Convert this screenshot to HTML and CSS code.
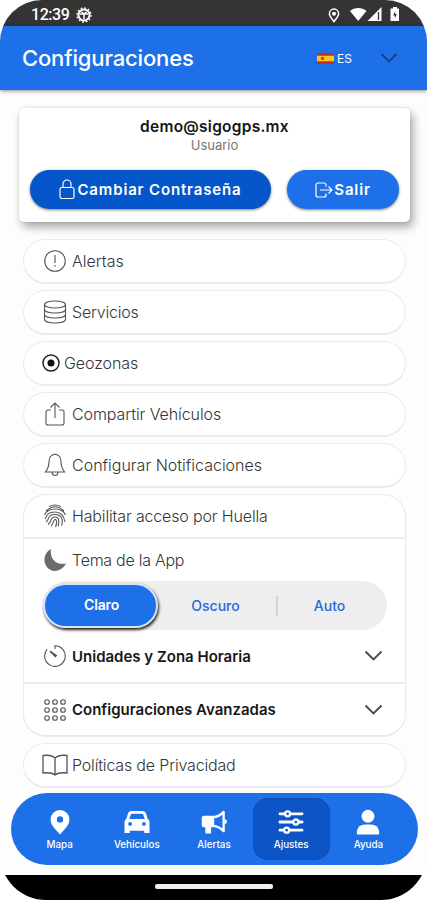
FILE: index.html
```html
<!DOCTYPE html>
<html lang="es">
<head>
<meta charset="utf-8">
<title>Configuraciones</title>
<link rel="stylesheet" href="styles.css">
</head>
<body>
<div class="screen">
  <div class="status">
    <span class="clock">12:39</span>
    <svg class="gear" width="16" height="16" viewBox="0 0 16 16"><circle cx="8" cy="8" r="5.500" fill="none" stroke="#fff" stroke-width="2"/><circle cx="8" cy="8" r="7" fill="none" stroke="#fff" stroke-width="1.400" stroke-dasharray="1.8 1.87"/><path d="M4 7h8M8 7v5M5.500 4.800L8 7l2.500-2.200" stroke="#fff" stroke-width="1.500" fill="none"/></svg>
    <svg class="pin" width="12" height="15" viewBox="0 0 12 15"><path d="M6 13.600C4 10.800 1.400 8.200 1.400 5.700a4.600 4.600 0 0 1 9.200 0C10.600 8.200 8 10.800 6 13.600Z" fill="none" stroke="#fff" stroke-width="1.500"/><circle cx="6" cy="5.700" r="2" fill="#fff"/></svg>
    <svg class="signals" width="49" height="16" viewBox="0 0 49 16"><path d="M0 4C4.500 0 12 0 16.500 4L8.200 14Z" fill="#fff"/><path d="M31.500 0v14H17.500Z" fill="#fff"/><path d="M28.500 5v8" stroke="#343434" stroke-width="1.300"/><path d="M41 1.500h2V0h4v1.500h2V14h-8.500V1.500Z" fill="#fff"/><path d="M45.200 4l-2 4.500h1.600v3l2-4.500h-1.600Z" fill="#343434"/></svg>
  </div>
  <header class="header">
    <h1>Configuraciones</h1>
    <div class="lang">
      <svg width="17" height="11" viewBox="0 0 17 11"><path fill="#c92a22" d="M0 0h17v11H0z"/><path fill="#fbc51c" d="M0 2.700h17v5.600H0z"/><path fill="#a9572c" d="M4 4h3v3H4z"/></svg>
      <span>ES</span>
    </div>
    <svg class="langchev" width="18" height="10" viewBox="0 0 18 10"><path d="M1.500 1L9 8.300 16.500 1" fill="none" stroke="#12376f" stroke-width="1.700"/></svg>
  </header>

  <section class="account">
    <div class="mail">demo@sigogps.mx</div>
    <div class="role">Usuario</div>
    <div class="actions">
      <button class="btn dark"><svg width="16" height="21" viewBox="0 0 16 21"><rect x="1" y="8.500" width="14" height="11" rx="1.800"/><path d="M4 8.500V5a4 4 0 0 1 8 0v3.500"/></svg><span>Cambiar Contraseña</span></button>
      <button class="btn exit"><svg width="18" height="16" viewBox="0 0 18 16"><path d="M11 4.500V3a2 2 0 0 0-2-2H3a2 2 0 0 0-2 2v10a2 2 0 0 0 2 2h6a2 2 0 0 0 2-2v-1.500M5 8h12M13.500 4.500L17 8l-3.500 3.500"/></svg><span>Salir</span></button>
    </div>
  </section>

  <main class="list">
    <div class="pill"><svg class="ic" viewBox="0 0 24 24"><circle cx="12" cy="12" r="10.300"/><path d="M12 6v8M12 16v1.800"/></svg><span>Alertas</span></div>
    <div class="pill tight"><svg class="ic" viewBox="0 0 24 24"><ellipse cx="12" cy="4.500" rx="10.500" ry="3.500"/><path d="M1.500 4.500v15c0 2 4.500 3.500 10.500 3.500s10.500-1.500 10.500-3.500v-15M1.500 9.500c0 2 4.500 3.500 10.500 3.500s10.500-1.500 10.500-3.500M1.500 14.500c0 2 4.500 3.500 10.500 3.500s10.500-1.500 10.500-3.500"/></svg><span>Servicios</span></div>
    <div class="pill geo"><svg width="18" height="18" viewBox="0 0 18 18"><circle cx="9" cy="9" r="8" fill="none" stroke="#222" stroke-width="1.500"/><circle cx="9" cy="9" r="3.500" fill="#111"/></svg><span>Geozonas</span></div>
    <div class="pill share"><svg class="ic" viewBox="0 0 24 24"><path d="M8 8H5a2 2 0 0 0-2 2v11a2 2 0 0 0 2 2h14a2 2 0 0 0 2-2V10a2 2 0 0 0-2-2h-3M12 16V1.500M7.500 5.500L12 1l4.500 4.500"/></svg><span>Compartir Vehículos</span></div>
    <div class="pill"><svg class="ic" viewBox="0 0 24 24"><path d="M12 1.300c-4.500.7-6 3.700-6 7.200 0 6-1.500 8-3.600 10.500h19.200C19.500 16.500 18 14.500 18 8.500c0-3.500-1.500-6.500-6-7.200ZM9 19.500c.3 4 5.700 4 6 0"/></svg><span>Configurar Notificaciones</span></div>

    <div class="group">
      <div class="row finger"><svg class="ic" viewBox="0 0 24 24"><path d="M6 2.500Q12-.5 18 2.500M3 7Q12-1.500 21 7M1.500 11C5 3 19 3 22.500 11M2 15c2-2 1-7 10-7 6 0 9 4 10 10M3 18c4-3 1-7.500 9-7.500 8 0 8 7 6.500 11M5 20.500c5-4 1.500-7.500 7-7.500 5 0 4 6 3 9.500M8 22c3-3 2-6.500 4-6.500s2 4 .5 7.500"/></svg><span>Habilitar acceso por Huella</span></div>
      <div class="row theme"><svg width="24" height="24" viewBox="0 0 24 24"><path d="M8 1C6.500 10.500 13 17.500 23 15.500 18.500 24 8.500 25.500 3.500 18.500-.5 12.500 1.500 4.500 8 1Z" fill="#6b6b6b"/></svg><span>Tema de la App</span></div>
      <div class="segment">
        <div class="seg active">Claro</div><div class="seg oscuro">Oscuro</div><i></i><div class="seg auto">Auto</div>
      </div>
      <div class="row fold units"><svg class="ic" viewBox="0 0 24 24"><path d="M12 5V1.700A10.300 10.300 0 1 1 4.200 5.200M7 7.500l5.500 4.700"/><path d="M7 7l6.500 4.500-1.300 1.300Z" fill="#444"/></svg><span>Unidades y Zona Horaria</span><svg class="chev" width="19" height="12" viewBox="0 0 19 12"><path d="M1.500 1.500l8 8 8-8"/></svg></div>
      <div class="row fold advanced"><svg class="ic" viewBox="0 0 24 24"><g><circle cx="4" cy="4" r="2.300"/><circle cx="12" cy="4" r="2.300"/><circle cx="20" cy="4" r="2.300"/><circle cx="4" cy="12" r="2.300"/><circle cx="12" cy="12" r="2.300"/><circle cx="20" cy="12" r="2.300"/><circle cx="4" cy="20" r="2.300"/><circle cx="12" cy="20" r="2.300"/><circle cx="20" cy="20" r="2.300"/></g></svg><span>Configuraciones Avanzadas</span><svg class="chev" width="19" height="12" viewBox="0 0 19 12"><path d="M1.500 1.500l8 8 8-8"/></svg></div>
    </div>

    <div class="pill privacy"><svg class="book" width="26" height="22" viewBox="0 0 26 22"><path d="M13 4C10 1 5 1 1 1.500V19c4-.5 9-.5 12 2 3-2.500 8-2.500 12-2V1.500C21 1 16 1 13 4ZM13 4v17"/></svg><span>Políticas de Privacidad</span></div>
  </main>

  <nav class="tabs">
    <a class="tab"><svg viewBox="0 0 27 27"><path fill="#fff" fill-rule="evenodd" d="M13.500 1A9.800 9.800 0 0 0 3.700 10.800C3.700 17 9.500 21.500 13.500 26.500 17.500 21.500 23.300 17 23.300 10.800A9.800 9.800 0 0 0 13.500 1ZM13.500 7.500a3.300 3.300 0 1 1 0 6.600 3.300 3.300 0 0 1 0-6.600Z"/></svg><span>Mapa</span></a>
    <a class="tab"><svg viewBox="0 0 27 27"><path fill="#fff" fill-rule="evenodd" d="M8 2h11q3 0 4 3l1.500 5q2 1 2 4v11h-5.500v-2.500h-15V25H.5V14q0-3 2-4L4 5q1-3 4-3ZM8.500 5q-1.200 0-1.700 1.500L5.500 10.500h16L20.200 6.500Q19.700 5 18.500 5ZM6.300 13.500a2 2 0 1 0 0 4 2 2 0 0 0 0-4ZM20.700 13.500a2 2 0 1 0 0 4 2 2 0 0 0 0-4Z"/></svg><span>Vehículos</span></a>
    <a class="tab"><svg viewBox="0 0 27 27"><path fill="#fff" d="M3.500 7H13v12h-2.500v6.500h-6V19H3.500Q.8 19 .8 16.500v-7Q.8 7 3.500 7Z"/><path d="M12.500 8.500Q19 8 23.500 3v20Q19 18 12.500 17.500Z" fill="none" stroke="#fff" stroke-width="2.400" stroke-linejoin="round"/><path d="M24.500 10q2.500 1 2.500 3t-2.500 3Z" fill="#fff"/></svg><span>Alertas</span></a>
    <a class="tab selected"><svg viewBox="0 0 27 27"><path d="M2 5h23M2 13.500h23M2 22h23" stroke="#fff" stroke-width="2.900" stroke-linecap="round"/><g fill="#0d55c7" stroke="#fff" stroke-width="2.400"><circle cx="10" cy="5" r="2.600"/><circle cx="18.500" cy="13.500" r="2.600"/><circle cx="9" cy="22" r="2.600"/></g></svg><span>Ajustes</span></a>
    <a class="tab"><svg viewBox="0 0 27 27"><circle cx="13.500" cy="7.500" r="6.700" fill="#fff"/><path d="M2 26.500v-3q1-7.500 8.500-7.500h6q7.500 0 8.500 7.500v3Z" fill="#fff"/></svg><span>Ayuda</span></a>
  </nav>
  <div class="gesture"><i></i></div>
</div>
</body>
</html>
```
FILE: styles.css
```css
* { box-sizing: border-box; }
body { margin: 0; background: #fff; font-family: Inter, "Open Sans", sans-serif; }
.screen { width: 427px; height: 900px; display: flex; flex-direction: column; overflow: hidden; border-radius: 42px 42px 46px 46px; background: #fdfdfd; white-space: nowrap; }
svg { flex: none; display: block; }

.status { flex: none; height: 26px; background: #343434; color: #fff; display: flex; align-items: center; padding: 4px 28px 0 31px; }
.clock { font: 500 16px/22px Roboto, sans-serif; letter-spacing: -.45px; }
.gear { margin-left: 7px; }
.pin { margin-left: auto; margin-right: 10px; }

.header { flex: none; height: 64px; background: #1e70e9; color: #fff; display: flex; align-items: center; padding: 0 29px 0 22px; box-shadow: 0 1px 4px rgba(0,0,0,.45); }
h1 { margin: 0; font-size: 22px; line-height: 28px; font-weight: 500; letter-spacing: -.15px; }
.lang { display: flex; align-items: center; gap: 3px; margin-left: auto; font-size: 12px; }
.langchev { margin-left: 28px; }

.account { flex: none; margin: 18px 17px 0 19px; height: 114px; border-radius: 5px; background: #fff; box-shadow: 3px 5px 10px rgba(0,0,0,.35), 0 0 2px rgba(0,0,0,.15); padding-top: 9px; text-align: center; }
.mail { font-size: 15.500px; line-height: 20px; font-weight: 600; letter-spacing: .25px; color: #161616; }
.role { font-size: 13px; line-height: 17px; color: #777; }
.actions { display: flex; gap: 16px; padding: 16px 11px 0; }
.btn { height: 39px; border: 0; padding: 0; border-radius: 20px; color: #fff; font: 600 15px/20px Inter, sans-serif; letter-spacing: .85px; display: flex; align-items: center; justify-content: center; gap: 2px; background: #1e70e9; box-shadow: 0 1px 3px rgba(0,0,0,.5); }
.btn svg { fill: none; stroke: #fff; stroke-width: 1.200; }
.dark { width: 241px; background: #0656cb; }
.exit { width: 112px; gap: 1px; }

.list { flex: none; margin: 17px 21px 0 23px; display: flex; flex-direction: column; gap: 6px; }
.pill { height: 45px; border: 1px solid #ebebeb; border-bottom-width: 2px; border-radius: 23px; background: #fff; display: flex; align-items: center; padding-left: 19px; gap: 5px; font-size: 16px; font-weight: 300; color: #353535; }
.ic { width: 24px; height: 24px; fill: none; stroke: #555; stroke-width: 1.100; }
.tight { letter-spacing: -.2px; }
.share { letter-spacing: -.08px; }
.geo { padding-left: 18px; gap: 4px; letter-spacing: -.08px; }
.book { fill: none; stroke: #555; stroke-width: 1.300; }
.privacy { padding-left: 18px; gap: 4px; letter-spacing: -.17px; }

.group { height: 243px; border: 1px solid #e9e9e9; border-bottom-width: 2px; border-radius: 23px; background: #fff; }
.row { display: flex; align-items: center; gap: 5px; padding: 0 19px; font-size: 16px; font-weight: 300; color: #353535; }
.finger { height: 44px; border-bottom: 2px solid #ededed; letter-spacing: -.15px; }
.theme { height: 41px; letter-spacing: -.27px; }
.segment { margin: 1px 18px 0 19px; height: 49px; border-radius: 25px; background: #eee; display: flex; align-items: center; color: #2868db; font-size: 14px; font-weight: 500; text-align: center; }
.active { width: 115px; height: 45px; line-height: 40px; padding-left: 2px; border-radius: 23px; background: #1e70e9; border: 2px solid #dce5ef; color: #fff; font-weight: 600; letter-spacing: -.15px; box-shadow: 1px 2px 3px rgba(0,0,0,.85); }
.oscuro { width: 115px; line-height: 46px; }
.segment i { width: 2px; height: 20px; margin-left: 3px; background: #d2d2d2; }
.auto { flex: 1; padding-right: 6px; line-height: 46px; }
.fold { font-size: 15px; font-weight: 600; color: #171717; }
.units { height: 54px; border-bottom: 2px solid #ececec; }
.advanced { height: 51px; }
.chev { margin-left: auto; margin-right: 3px; fill: none; stroke: #4b4b4b; stroke-width: 1.900; }

.tabs { flex: none; height: 72px; margin: 5px 9px 0 11px; border-radius: 36px; background: #1e70e9; display: flex; align-items: center; padding: 0 11px 0 10px; }
.tab { flex: 1; height: 62px; display: flex; flex-direction: column; align-items: center; color: #fff; font-size: 9.800px; line-height: 14px; font-weight: 500; padding-top: 11px; gap: 3px; }
.tab svg { width: 26px; height: 26px; }
.selected { background: #0d55c7; border-radius: 15px; box-shadow: inset 0 0 0 1px #164fa9; }
.gesture { flex: none; height: 25px; margin-top: 10px; background: #000; display: flex; justify-content: center; padding-top: 9px; }
.gesture i { width: 118px; height: 5px; background: #eee; border-radius: 2px; }
```
